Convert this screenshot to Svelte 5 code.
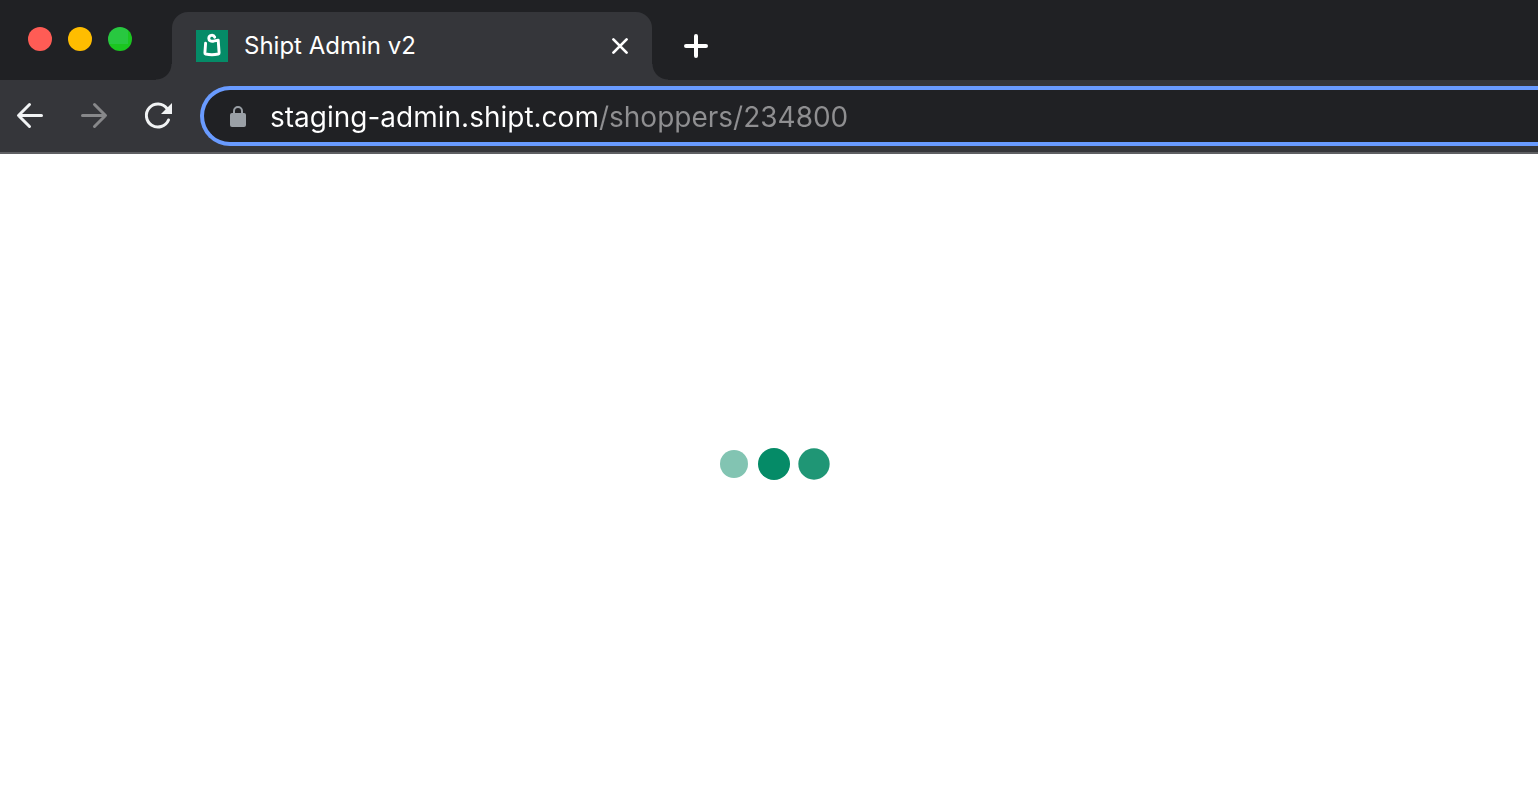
<script>
  import { onMount } from 'svelte';

  const host = 'staging-admin.shipt.com';
  const path = '/shoppers/234800';

  let address = $state(host + path);
  let field;
  let hostWidth = $state(329);

  // The host part is drawn brighter than the path that follows it.
  onMount(() => {
    const context = document.createElement('canvas').getContext('2d');
    context.font = getComputedStyle(field).font;
    hostWidth = Math.round(context.measureText(host).width);
  });
</script>

<div class="window">
  <header>
    <div class="tabs">
      <div class="lights">
        <button class="light red" aria-label="Close window"></button>
        <button class="light yellow" aria-label="Minimize window"></button>
        <button class="light green" aria-label="Zoom window"></button>
      </div>
      <div class="tab">
        <svg class="favicon" viewBox="0 0 32 32" aria-hidden="true">
          <rect width="32" height="32" fill="#058b67" />
          <path
            d="M9.6 13.2 8.9 22.8Q8.8 23.7 9.7 24Q16 25.4 22.2 24Q23.2 23.7 23.1 22.8L22.2 10.2 17.4 11.2C14.8 11.6 12.8 10.6 12.8 8.6C12.8 5 17.4 4.2 18.7 7.2"
            fill="none" stroke="#fff" stroke-width="2.9" stroke-linecap="round" stroke-linejoin="round" />
        </svg>
        <span class="title">Shipt Admin v2</span>
        <button class="icon small" aria-label="Close tab">
          <svg viewBox="0 0 24 24"><path d="M5.4 5.4 18.6 18.6M18.6 5.4 5.4 18.6" stroke="#fff" stroke-width="2.7" stroke-linecap="round" /></svg>
        </button>
      </div>
      <button class="icon new" aria-label="New tab">
        <svg viewBox="0 0 32 32"><path d="M16 6V26M6 16H26" stroke="#fff" stroke-width="4" stroke-linecap="round" /></svg>
      </button>
    </div>

    <nav class="toolbar" aria-label="Browser">
      <button class="icon" aria-label="Back">
        <svg viewBox="0 0 32 32" fill="none" stroke="#f1f3f4" stroke-width="3" stroke-linecap="round" stroke-linejoin="round"><path d="M27.5 15.5H4.8M15.5 4.5 4.5 15.5 15.5 26.5" /></svg>
      </button>
      <button class="icon" aria-label="Forward" disabled>
        <svg viewBox="0 0 32 32" fill="none" stroke="#87888a" stroke-width="3" stroke-linecap="round" stroke-linejoin="round"><path d="M4.5 15.5H27.2M16.5 4.5 27.5 15.5 16.5 26.5" /></svg>
      </button>
      <button class="icon" aria-label="Reload">
        <svg viewBox="0 0 32 32"><path d="M25 8.5A11.5 11.5 0 1 0 26.5 20" fill="none" stroke="#f1f3f4" stroke-width="3" stroke-linecap="round" /><path d="M30 3V14H19Z" fill="#f1f3f4" /></svg>
      </button>
      <div class="omnibox">
        <svg class="lock" viewBox="0 0 16 22" aria-hidden="true">
          <path d="M4 8V5a4 4 0 0 1 8 0V8" fill="none" stroke="#9aa0a6" stroke-width="2" />
          <rect y="7" width="16" height="14" rx="2" fill="#9aa0a6" />
        </svg>
        <input
          type="text"
          aria-label="Address"
          spellcheck="false"
          bind:this={field}
          bind:value={address}
          style:--host-width="{hostWidth}px"
        />
      </div>
    </nav>
  </header>

  <main>
    <div class="loader" role="status" aria-label="Loading">
      <span class="dot faint"></span>
      <span class="dot"></span>
      <span class="dot soft"></span>
    </div>
  </main>
</div>

<style>
  :global(body) {
    margin: 0;
    background: #fff;
  }

  .window {
    display: flex;
    flex-direction: column;
    min-height: 100vh;
    overflow: hidden;
    font-family: Inter, "Liberation Sans", sans-serif;
  }

  button {
    flex: none;
    padding: 0;
    border: 0;
    background: none;
  }

  svg {
    display: block;
    flex: none;
  }

  .tabs {
    display: flex;
    align-items: flex-end;
    height: 80px;
    background: #202124;
  }

  .lights {
    display: flex;
    align-self: center;
    gap: 16px;
    padding: 0 40px 2px 28px;
  }

  .light {
    width: 24px;
    height: 24px;
    border-radius: 50%;
  }

  .red {
    background: #ff5c55;
  }

  .yellow {
    background: #ffbd00;
  }

  .green {
    background: linear-gradient(#28c840, #28c840) 0 0 / 20px 17px no-repeat #1bc620;
  }

  .tab {
    position: relative;
    display: flex;
    align-items: center;
    box-sizing: border-box;
    width: 480px;
    height: 68px;
    padding: 0 20px 0 24px;
    border-radius: 16px 16px 0 0;
    background: #35363a;
    color: #fff;
  }

  .tab::before,
  .tab::after {
    content: "";
    position: absolute;
    bottom: 0;
    width: 16px;
    height: 16px;
  }

  .tab::before {
    right: 100%;
    background: radial-gradient(circle at 0 0, #202124 15px, #35363a 16px);
  }

  .tab::after {
    left: 100%;
    background: radial-gradient(circle at 100% 0, #202124 15px, #35363a 16px);
  }

  .favicon {
    width: 32px;
    height: 32px;
    margin-right: 16px;
  }

  .title {
    flex: 1;
    font-size: 24px;
    line-height: 32px;
  }

  .icon,
  .icon svg {
    width: 32px;
    height: 32px;
  }

  .small,
  .small svg {
    width: 24px;
    height: 24px;
  }

  .new {
    margin: 0 0 18px 28px;
  }

  .toolbar {
    display: flex;
    align-items: center;
    gap: 32px;
    height: 72px;
    padding-left: 14px;
    border-bottom: 2px solid #5f6063;
    background: #35363a;
  }

  .omnibox {
    display: flex;
    flex: 1;
    align-items: center;
    gap: 24px;
    box-sizing: border-box;
    height: 60px;
    margin-left: -6px;
    padding: 2px 0 0 26px;
    border: 4px solid #699bff;
    border-right: 0;
    border-radius: 30px 0 0 30px;
    background: #202124;
  }

  .lock {
    width: 16px;
    height: 22px;
  }

  input {
    flex: 1;
    min-width: 0;
    padding: 0;
    border: 0;
    outline: 0;
    background: linear-gradient(90deg, #fff var(--host-width), #8f8f91 var(--host-width));
    background-clip: text;
    color: transparent;
    caret-color: #fff;
    font: 400 28px/40px Inter, "Liberation Sans", sans-serif;
  }

  main {
    display: flex;
    flex: 1;
    align-items: center;
    justify-content: center;
    padding: 0 0 16px 10px;
  }

  .loader {
    display: flex;
    gap: 8px;
  }

  .dot {
    width: 32px;
    height: 32px;
    border-radius: 50%;
    background: #058b67;
  }

  .faint {
    background: #82c4b2;
    transform: scale(0.875);
  }

  .soft {
    background: #1f9675;
    transform: scale(0.98);
  }
</style>
